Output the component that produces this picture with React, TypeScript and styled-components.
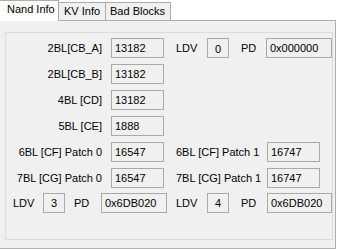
import React from "react";
import styled, { createGlobalStyle } from "styled-components";

const Global = createGlobalStyle`
  html, body { margin: 0; padding: 0; background: #ffffff; }
  body { width: 338px; height: 250px; overflow: hidden; font-family: "Liberation Sans", Arial, sans-serif; font-size: 11px; color: #000; }
`;

const TabControl = styled.div`
  margin-left: -1px;
  width: 337px;
  display: flex;
  flex-direction: column;
`;

const TabStrip = styled.div`
  display: flex;
  align-items: flex-end;
  height: 21px;
`;

const Tab = styled.div<{ $w: number; $active?: boolean; $pl: number }>`
  box-sizing: border-box;
  width: ${(p) => p.$w}px;
  height: ${(p) => (p.$active ? 21 : 19)}px;
  padding-left: ${(p) => p.$pl}px;
  background: ${(p) => (p.$active ? "#ffffff" : "#f0f0f0")};
  border: 1px solid #adadad;
  border-left: ${(p) => (p.$active ? "1px solid #adadad" : "none")};
  border-bottom: ${(p) => (p.$active ? "none" : "1px solid #adadad")};
  line-height: ${(p) => (p.$active ? 17 : 16)}px;
  white-space: nowrap;
`;

const Filler = styled.div`
  flex: 1;
  height: 1px;
  border-bottom: 1px solid #adadad;
  box-sizing: border-box;
`;

const Panel = styled.div`
  box-sizing: border-box;
  height: 228px;
  background: #f0f0f0;
  border: 1px solid #adadad;
  border-top: none;
  padding: 11px 2px 8px 5px;
  display: flex;
`;

const Group = styled.div`
  flex: 1;
  box-sizing: border-box;
  border: 1px solid #dcdcdc;
  padding-top: 5px;
  display: flex;
  flex-direction: column;
  gap: 6px;
`;

const Row = styled.div<{ $mt?: number }>`
  display: flex;
  align-items: center;
  height: 20px;
  margin-top: ${(p) => p.$mt ?? 0}px;
`;

const Label = styled.div<{ $w: number; $pl?: number; $right?: boolean; $mr?: number }>`
  box-sizing: border-box;
  width: ${(p) => p.$w}px;
  padding-left: ${(p) => p.$pl ?? 0}px;
  margin-right: ${(p) => p.$mr ?? 0}px;
  text-align: ${(p) => (p.$right ? "right" : "left")};
  white-space: nowrap;
  line-height: 20px;
`;

const Field = styled.div<{ $w: number; $center?: boolean; $dy?: number }>`
  box-sizing: border-box;
  width: ${(p) => p.$w}px;
  height: 20px;
  border: 1px solid #a9a9a9;
  background: #f0f0f0;
  padding-left: ${(p) => (p.$center ? 0 : 3)}px;
  padding-top: ${(p) => p.$dy ?? 0}px;
  text-align: ${(p) => (p.$center ? "center" : "left")};
  line-height: 18px;
  white-space: nowrap;
  overflow: hidden;
`;

const simpleRows = [
  ["2BL[CB_B]", "13182"],
  ["4BL [CD]", "13182"],
  ["5BL [CE]", "1888"],
];

const patchRows = [
  ["6BL [CF] Patch 0", "16547", "6BL [CF] Patch 1", "16747"],
  ["7BL [CG] Patch 0", "16547", "7BL [CG] Patch 1", "16747"],
];

export default function App() {
  return (
    <>
      <Global />
      <TabControl>
        <TabStrip>
          <Tab $w={60} $active $pl={7}>Nand Info</Tab>
          <Tab $w={47} $pl={5}>KV Info</Tab>
          <Tab $w={65} $pl={4}>Bad Blocks</Tab>
          <Filler />
        </TabStrip>
        <Panel>
          <Group>
            <Row>
              <Label $w={96} $right $mr={9}>2BL[CB_A]</Label>
              <Field $w={53}>13182</Field>
              <Label $w={43} $pl={12}>LDV</Label>
              <Field $w={22} $center $dy={1}>0</Field>
              <Label $w={37} $pl={12}>PD</Label>
              <Field $w={66}>0x000000</Field>
            </Row>
            {simpleRows.map(([l, v]) => (
              <Row key={l}>
                <Label $w={96} $right $mr={9}>{l}</Label>
                <Field $w={53}>{v}</Field>
              </Row>
            ))}
            {patchRows.map(([l1, v1, l2, v2]) => (
              <Row key={l1}>
                <Label $w={96} $right $mr={9}>{l1}</Label>
                <Field $w={53}>{v1}</Field>
                <Label $w={103} $pl={12}>{l2}</Label>
                <Field $w={53}>{v2}</Field>
              </Row>
            ))}
            <Row $mt={-1}>
              <Label $w={37} $pl={7}>LDV</Label>
              <Field $w={22} $center>3</Field>
              <Label $w={36} $pl={9}>PD</Label>
              <Field $w={66}>0x6DB020</Field>
              <Label $w={40} $pl={9}>LDV</Label>
              <Field $w={22} $center>4</Field>
              <Label $w={38} $pl={12}>PD</Label>
              <Field $w={65}>0x6DB020</Field>
            </Row>
          </Group>
        </Panel>
      </TabControl>
    </>
  );
}
